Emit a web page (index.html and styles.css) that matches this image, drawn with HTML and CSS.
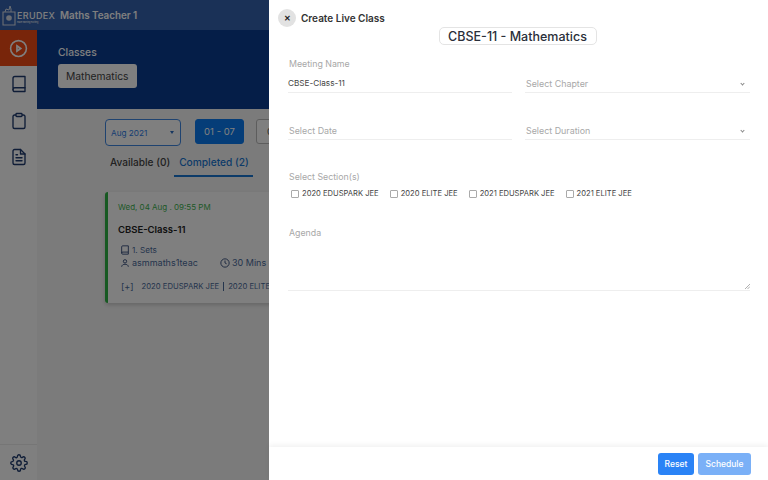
FILE: index.html
```html
<!DOCTYPE html>
<html lang="en">
<head>
<meta charset="utf-8">
<title>Create Live Class</title>
<link rel="stylesheet" href="styles.css">
</head>
<body>
<div class="app">
  <header class="topbar">
    <div class="logo">
      <svg class="logo-mark" viewBox="0 0 14 21" width="14" height="21" fill="none" stroke="#d4dbe6" stroke-width="1.100"><path d="M1 7h12v13H1z"/><path d="M3 7l1-3 3 1 1-4 1 3v3" stroke-width="1"/><circle cx="7" cy="13" r="2.800" fill="#d4dbe6" stroke="none"/></svg>
      <div class="logo-text"><span class="logo-name">ERUDEX</span><span class="logo-sub">make learning exciting</span></div>
    </div>
    <div class="teacher">Maths Teacher 1</div>
  </header>
  <div class="body">
    <nav class="rail">
      <div class="rail-item rail-active">
        <svg viewBox="0 0 24 24" width="19" height="19" fill="none" stroke="#fff" stroke-width="2"><circle cx="12" cy="12" r="10"/><path d="M10 8.500l5 3.500-5 3.500z" fill="#fff" fill-opacity=".4"/></svg>
      </div>
      <div class="rail-item">
        <svg viewBox="0 0 24 24" width="18" height="18" fill="none" stroke="#1f3a6e" stroke-width="1.800" stroke-linejoin="round" stroke-linecap="round"><path d="M4 19.500A2.500 2.500 0 0 1 6.500 17H20V2H6.500A2.500 2.500 0 0 0 4 4.500z"/><path d="M4 19.500A2.500 2.500 0 0 0 6.500 22H20v-5"/></svg>
      </div>
      <div class="rail-item rail-gap">
        <svg viewBox="0 0 24 24" width="18" height="18" fill="none" stroke="#1f3a6e" stroke-width="1.800" stroke-linejoin="round"><path d="M8 4H6a2 2 0 0 0-2 2v14a2 2 0 0 0 2 2h12a2 2 0 0 0 2-2V6a2 2 0 0 0-2-2h-2"/><rect x="8" y="2" width="8" height="4" rx="1"/></svg>
      </div>
      <div class="rail-item">
        <svg viewBox="0 0 24 24" width="18" height="18" fill="none" stroke="#1f3a6e" stroke-width="1.800" stroke-linejoin="round" stroke-linecap="round"><path d="M14 2H6a2 2 0 0 0-2 2v16a2 2 0 0 0 2 2h12a2 2 0 0 0 2-2V8z"/><path d="M14 2v6h6M8 13h8M8 17h8M8 9h2"/></svg>
      </div>
      <div class="rail-foot">
        <svg viewBox="0 0 24 24" width="18" height="18" fill="none" stroke="#1f3a6e" stroke-width="1.800" stroke-linejoin="round"><circle cx="12" cy="12" r="3"/><path d="M19.400 15a1.650 1.650 0 0 0 .33 1.820l.06.06a2 2 0 1 1-2.830 2.830l-.06-.06a1.650 1.650 0 0 0-2.820 1.170V21a2 2 0 1 1-4 0v-.09A1.650 1.650 0 0 0 7.300 19.740l-.06.06a2 2 0 1 1-2.830-2.830l.06-.06a1.650 1.650 0 0 0-1.170-2.820H3a2 2 0 1 1 0-4h.09A1.650 1.650 0 0 0 4.260 7.300l-.06-.06a2 2 0 1 1 2.830-2.830l.06.06a1.650 1.650 0 0 0 2.820-1.170V3a2 2 0 1 1 4 0v.09a1.650 1.650 0 0 0 2.820 1.170l.06-.06a2 2 0 1 1 2.830 2.830l-.06.06a1.650 1.650 0 0 0 1.170 2.820H21a2 2 0 1 1 0 4h-.09a1.650 1.650 0 0 0-1.510 1z"/></svg>
      </div>
    </nav>
    <main class="main">
      <section class="hero">
        <div class="hero-label">Classes</div>
        <div class="chip">Mathematics</div>
      </section>
      <section class="content">
        <div class="filters">
          <div class="month"><span>Aug 2021</span><i class="caret"></i></div>
          <div class="week week-on">01 - 07</div>
          <div class="week week-next"><span>0</span></div>
        </div>
        <div class="tabs">
          <div class="tab">Available (0)</div>
          <div class="tab tab-on">Completed (2)</div>
        </div>
        <article class="card">
          <div class="card-date">Wed, 04 Aug . 09:55 PM</div>
          <div class="card-title">CBSE-Class-11</div>
          <div class="card-row card-row-first">
            <svg viewBox="0 0 24 24" width="10" height="10" fill="none" stroke="#1f3a6e" stroke-width="2"><path d="M4 19.500A2.500 2.500 0 0 1 6.500 17H20V2H6.500A2.500 2.500 0 0 0 4 4.500zM4 19.500A2.500 2.500 0 0 0 6.500 22H20v-5"/></svg>
            <span class="card-sets">1. Sets</span>
          </div>
          <div class="card-row">
            <svg viewBox="0 0 24 24" width="10" height="10" fill="none" stroke="#1f3a6e" stroke-width="2"><circle cx="12" cy="8" r="4"/><path d="M4 21c0-4 4-6 8-6s8 2 8 6"/></svg>
            <span class="card-user">asmmaths1teac</span>
            <svg viewBox="0 0 24 24" width="10" height="10" fill="none" stroke="#1f3a6e" stroke-width="2"><circle cx="12" cy="12" r="10"/><path d="M12 6v6l4 2"/></svg>
            <span>30 Mins</span>
          </div>
          <div class="card-sections"><span class="plus">[+]</span><span class="sec">2020 EDUSPARK JEE</span><span class="sec sec-bar">2020 ELITE JEE</span></div>
        </article>
      </section>
    </main>
  </div>
  <div class="scrim"></div>
  <aside class="drawer">
    <div class="drawer-main">
      <div class="drawer-head">
        <div class="close">&#x2715;</div>
        <div class="drawer-title">Create Live Class</div>
      </div>
      <div class="title-wrap"><div class="class-title">CBSE-11 - Mathematics</div></div>
      <form class="form">
        <div class="field field-first">
          <div class="label">Meeting Name</div>
          <div class="line value">CBSE-Class-11</div>
        </div>
        <div class="field field-first">
          <div class="line select"><span>Select Chapter</span><i class="chev"></i></div>
        </div>
        <div class="field">
          <div class="line select"><span>Select Date</span></div>
        </div>
        <div class="field">
          <div class="line select"><span>Select Duration</span><i class="chev"></i></div>
        </div>
        <div class="wide sections">
          <div class="label">Select Section(s)</div>
          <div class="checks">
            <label class="check"><i class="box"></i>2020 EDUSPARK JEE</label>
            <label class="check"><i class="box"></i>2020 ELITE JEE</label>
            <label class="check"><i class="box"></i>2021 EDUSPARK JEE</label>
            <label class="check"><i class="box"></i>2021 ELITE JEE</label>
          </div>
        </div>
        <div class="wide agenda">
          <div class="label">Agenda</div>
          <svg class="grip" viewBox="0 0 6 6" width="5" height="5" stroke="#888" stroke-width=".8"><path d="M0 6l6-6M3 6l3-3"/></svg>
        </div>
      </form>
    </div>
    <footer class="drawer-foot">
      <div class="btn btn-reset">Reset</div>
      <div class="btn btn-sched">Schedule</div>
    </footer>
  </aside>
</div>
</body>
</html>
```

FILE: styles.css
```css
* { box-sizing: border-box; }
html, body { margin: 0; height: 100%; }
body { font-family: "Inter", "Liberation Sans", sans-serif; background: #f7f7f7; overflow: hidden; }
.app { position: relative; width: 768px; height: 480px; overflow: hidden; display: flex; flex-direction: column; }

.topbar { height: 30px; flex: none; background: #3563ae; display: flex; align-items: center; padding-left: 2px; }
.logo { display: flex; align-items: center; gap: 1px; width: 58px; }
.logo-text { display: flex; flex-direction: column; margin-top: 5px; }
.logo-name { font: 500 9px/10px "Inter", sans-serif; color: #fff; letter-spacing: .35px; }
.logo-sub { font: 2px/3px "Inter", sans-serif; color: #fff; white-space: nowrap; }
.teacher { font-size: 9.800px; font-weight: 600; color: #fff; }

.body { flex: 1; display: flex; min-height: 0; }
.rail { width: 37px; flex: none; background: #fff; display: flex; flex-direction: column; box-shadow: 1px 0 2px rgba(0,0,0,.08); }
.rail-item { height: 36px; flex: none; display: flex; align-items: center; justify-content: center; }
.rail-gap { margin-top: 1px; }
.rail-active { background: #f04a14; }
.rail-foot { margin-top: auto; height: 36px; border-top: 1px solid #ececec; display: flex; align-items: center; justify-content: center; }

.main { flex: 1; min-width: 0; display: flex; flex-direction: column; overflow: hidden; }
.hero { height: 79px; flex: none; background: #0a3c90; padding: 16px 21px; }
.hero-label { font-size: 10.300px; font-weight: 500; line-height: 12px; color: #fff; }
.chip { display: inline-flex; align-items: center; height: 24px; margin-top: 6px; padding: 0 8px; background: #fff; border-radius: 3px; font-size: 10.300px; color: #444; }

.content { flex: 1; padding: 10px 0 0 68px; background: #f7f7f7; }
.filters { display: flex; gap: 12px; align-items: flex-start; height: 27px; }
.month { width: 76px; height: 27px; border: 1px solid #3f86e0; border-radius: 4px; display: flex; align-items: center; justify-content: space-between; padding: 0 6px 0 5px; font-size: 8.200px; color: #2c7be5; background: #fff; margin-right: 2px; flex: none; }
.caret { width: 0; height: 0; border: 2.500px solid transparent; border-top: 3px solid #2c6cc0; border-bottom: 0; }
.week { width: 49px; height: 25px; flex: none; border-radius: 3px; border: 1px solid #bbb; display: flex; align-items: center; justify-content: center; font-size: 9.500px; color: #555; background: #fff; }
.week-on { background: #0a7bf0; border-color: #0a7bf0; color: #fff; }
.week-next { justify-content: flex-start; padding-left: 10px; }
.tabs { display: flex; margin-top: 8px; height: 23px; gap: 3px; margin-left: 4px; }
.tab { font-size: 10.100px; font-weight: 500; line-height: 16px; padding: 0 1px; color: #444; white-space: nowrap; }
.tab-on { color: #1976d2; border-bottom: 2px solid #1976d2; padding: 0 4px 0 5px; font-size: 10.200px; }
.card { width: 300px; height: 111px; margin-top: 15px; background: #fff; border-left: 3px solid #2fb344; border-radius: 3px; padding: 10px 10px; box-shadow: 0 2px 4px rgba(0,0,0,.18); }
.card-date { font-size: 8px; line-height: 10px; color: #3fb34f; }
.card-title { font-size: 9.500px; font-weight: 600; color: #222; margin-top: 12px; line-height: 12px; }
.card-row { display: flex; align-items: center; gap: 2px; font-size: 9px; color: #4a6a9a; height: 13px; margin-left: 2px; }
.card-row-first { margin-top: 7px; }
.card-sets { font-size: 8.200px; }
.card-user { width: 86px; }
.card-sections { display: flex; align-items: center; gap: 6px; margin-top: 12px; font-size: 7.700px; color: #4a6a9a; margin-left: 3px; white-space: nowrap; }
.plus { font-size: 9px; margin-right: 2px; }
.sec-bar { border-left: 1px solid #4a6a9a; padding-left: 4px; margin-left: -2px; }

.scrim { position: absolute; inset: 0; background: rgba(0,0,0,.5); }
.drawer { position: absolute; top: 0; right: 0; bottom: 0; width: 499px; background: #fff; display: flex; flex-direction: column; }
.drawer-main { flex: 1; min-height: 0; padding: 9px 18px 0 19px; }
.drawer-head { display: flex; align-items: center; gap: 5px; height: 18px; margin-left: -10px; }
.close { width: 18px; height: 18px; border-radius: 50%; background: #e2e2e2; display: flex; align-items: center; justify-content: center; font-size: 8px; font-weight: 700; color: #222; }
.drawer-title { font-size: 10px; font-weight: 600; color: #333; }
.title-wrap { display: flex; justify-content: center; padding-right: 3px; }
.class-title { width: 158px; height: 18px; border: 1px solid #e4e4e4; border-radius: 5px; display: flex; align-items: center; justify-content: center; font-size: 12.500px; font-weight: 500; color: #2a2f3a; white-space: nowrap; }
.form { display: grid; grid-template-columns: 224px 225px; column-gap: 13px; margin-top: 13px; }
.field { height: 36px; display: flex; flex-direction: column; justify-content: flex-end; }
.field-first { height: 35px; margin-bottom: 11px; }
.label { font-size: 8.800px; line-height: 12px; color: #a8a8a8; padding-left: 1px; }
.line { height: 20px; margin-top: auto; border-bottom: 1px solid #eee; display: flex; align-items: center; justify-content: space-between; padding: 1px 6px 0 1px; }
.value { color: #444; padding: 0; font-size: 8.200px; }
.select { color: #a8a8a8; font-size: 8.900px; }
.chev { width: 3px; height: 3px; border: solid #888; border-width: 0 1px 1px 0; transform: rotate(45deg); }
.wide { grid-column: 1 / -1; }
.sections { margin-top: 31px; }
.checks { display: flex; gap: 11px; margin-top: 5px; margin-left: 3px; }
.check { display: flex; align-items: center; gap: 3px; font-size: 7.600px; line-height: 12px; color: #444; white-space: nowrap; }
.box { width: 8px; height: 8px; border: 1px solid #aaa; border-radius: 1px; display: block; }
.agenda { position: relative; height: 64px; margin-top: 27px; border-bottom: 1px solid #eee; }
.grip { position: absolute; right: 0; bottom: 1px; }
.drawer-foot { height: 33px; flex: none; display: flex; justify-content: flex-end; align-items: flex-start; gap: 4px; padding: 6px 17px 0 0; box-shadow: 0 -2px 5px rgba(0,0,0,.06); }
.btn { height: 22px; border-radius: 3px; display: flex; align-items: center; justify-content: center; font-size: 8.500px; font-weight: 500; color: #fff; }
.btn-reset { width: 36px; background: #2a83f6; }
.btn-sched { width: 53px; background: #7ab0f7; }
```
